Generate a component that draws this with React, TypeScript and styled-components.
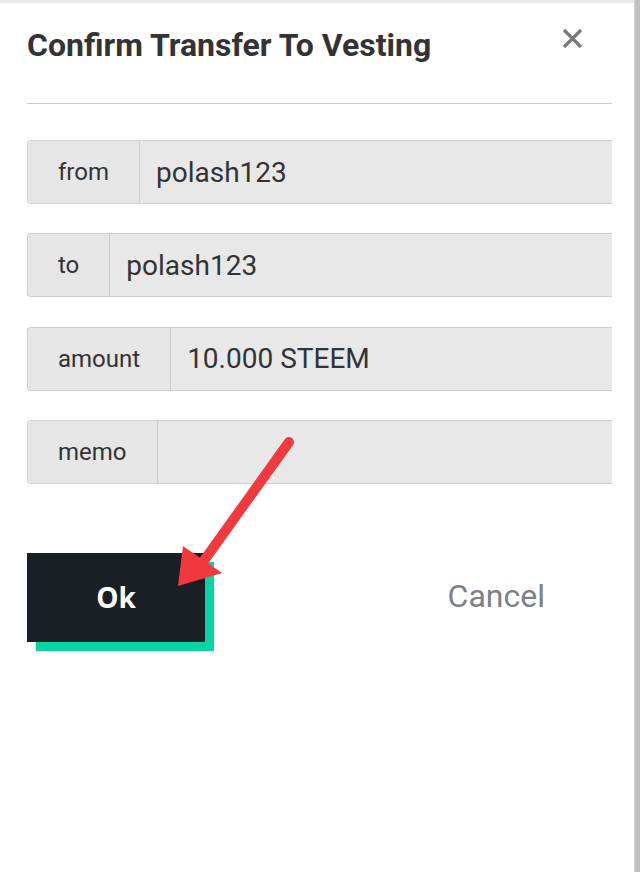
import React from 'react'
import styled, { createGlobalStyle } from 'styled-components'

const GlobalStyle = createGlobalStyle`
  html, body {
    margin: 0;
    padding: 0;
    background: #fff;
  }
  body {
    font-family: Roboto, 'Liberation Sans', sans-serif;
    color: #333;
  }
`

const Frame = styled.div`
  position: relative;
  display: flex;
  width: 640px;
  height: 872px;
  overflow: hidden;
  background: #fff;
`

const Dialog = styled.div`
  flex: 1;
  min-width: 0;
  display: flex;
  flex-direction: column;
`

const TopStrip = styled.div`
  height: 3px;
  background: #e8e9ed;
`

const Body = styled.div`
  padding: 23px 22px 0 27px;
`

const Scrollbar = styled.div`
  flex: 0 0 6px;
  box-sizing: border-box;
  background: #c1c1c1;
  border-left: 1px solid #d4d4d4;
`

const Header = styled.div`
  display: flex;
  justify-content: space-between;
  align-items: flex-start;
  padding-bottom: 39px;
  border-bottom: 1px solid #cbcbcb;
`

const Title = styled.h1`
  margin: 0;
  font-family: Roboto, 'Liberation Sans', sans-serif;
  font-size: 32px;
  line-height: 38px;
  font-weight: 700;
  color: #333;
`

const CloseButton = styled.button`
  display: flex;
  margin: 2px 29px 0 0;
  padding: 0;
  border: none;
  background: transparent;
  cursor: pointer;
`

const Fields = styled.div`
  display: flex;
  flex-direction: column;
  gap: 29.3px;
  margin-top: 36px;
`

const Field = styled.div`
  display: flex;
  height: 64px;
  box-sizing: border-box;
  border: 1px solid #cfcfcf;
  border-right: none;
  border-radius: 4px 0 0 4px;
  overflow: hidden;
  background: #e8e8e8;
`

const Label = styled.div`
  display: flex;
  align-items: center;
  padding: 0 30px;
  font-size: 24px;
  color: #333;
  background: #e6e6e6;
  border-right: 1px solid #cccccc;
`

const Value = styled.div`
  flex: 1;
  display: flex;
  align-items: center;
  padding: 0 16px;
  font-size: 28px;
  color: #333;
`

const Actions = styled.div`
  display: flex;
  align-items: center;
  margin-top: 69px;
`

const OkButton = styled.button`
  width: 178px;
  height: 89px;
  border: none;
  background: #1a1f25;
  color: #fff;
  font-family: 'Open Sans', 'Noto Sans', sans-serif;
  font-size: 28px;
  font-weight: 700;
  box-shadow: 9px 9px 0 #07d4a5;
  cursor: pointer;
`

const CancelButton = styled.button`
  margin-left: auto;
  margin-right: 67px;
  margin-bottom: 3px;
  padding: 0;
  border: none;
  background: transparent;
  color: #7c8189;
  font-family: Roboto, 'Liberation Sans', sans-serif;
  font-size: 32px;
  cursor: pointer;
`

const Overlay = styled.svg`
  position: absolute;
  top: 0;
  left: 0;
  pointer-events: none;
`

const fields = [
  { label: 'from', value: 'polash123' },
  { label: 'to', value: 'polash123' },
  { label: 'amount', value: '10.000 STEEM' },
  { label: 'memo', value: '' },
]

function App() {
  return (
    <>
      <GlobalStyle />
      <Frame>
        <Dialog>
          <TopStrip />
          <Body>
            <Header>
              <Title>Confirm Transfer To Vesting</Title>
              <CloseButton aria-label="close">
                <svg width="21" height="21" viewBox="0 0 21 21">
                  <path d="M2 2 L19 19 M19 2 L2 19" stroke="#7a7a7a" strokeWidth="3.2" />
                </svg>
              </CloseButton>
            </Header>
            <Fields>
              {fields.map(f => (
                <Field key={f.label}>
                  <Label>{f.label}</Label>
                  <Value>{f.value}</Value>
                </Field>
              ))}
            </Fields>
            <Actions>
              <OkButton>Ok</OkButton>
              <CancelButton>Cancel</CancelButton>
            </Actions>
          </Body>
        </Dialog>
        <Scrollbar />
        <Overlay width="640" height="872" viewBox="0 0 640 872">
          <line x1="289" y1="442" x2="203" y2="562" stroke="#f23a3e" strokeWidth="10" strokeLinecap="round" />
          <polygon points="178,586 183,546 222,573" fill="#f23a3e" />
        </Overlay>
      </Frame>
    </>
  )
}

export default App
